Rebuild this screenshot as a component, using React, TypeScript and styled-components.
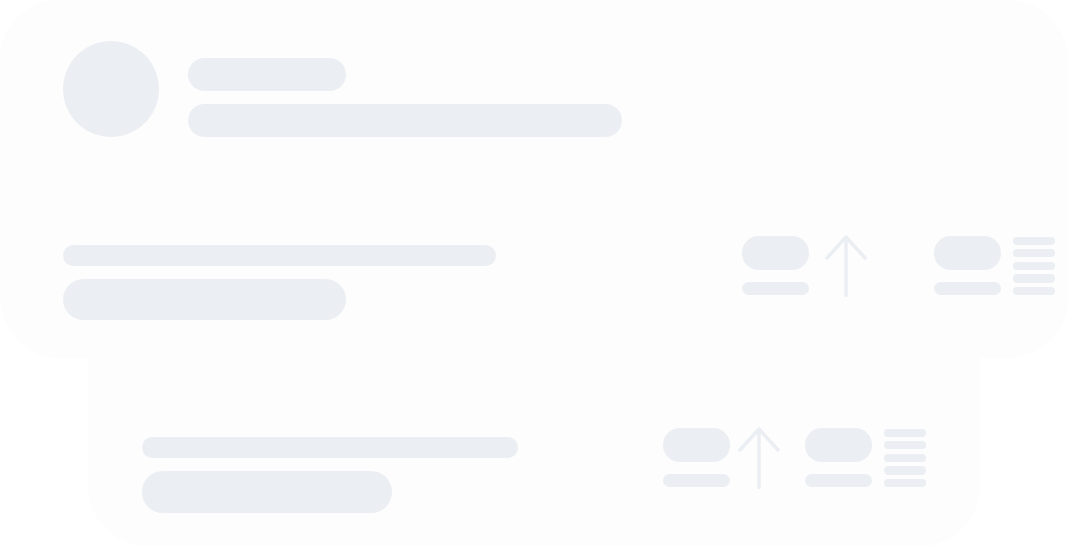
import React from "react";
import styled, { createGlobalStyle } from "styled-components";

const Global = createGlobalStyle`
  html, body { margin: 0; padding: 0; background: #ffffff; overflow: hidden; }
  body { font-family: "Inter", "Liberation Sans", sans-serif; }
`;

const BONE = "#ebeef2";
const CARD = "#fdfdfd";

const Page = styled.div`
  width: 1068px;
  height: 546px;
  display: flex;
  flex-direction: column;
`;

const TopCard = styled.section`
  box-sizing: border-box;
  width: 1068px;
  height: 358px;
  background: ${CARD};
  border-radius: 60px;
  padding: 41px 13px 0 63px;
  display: flex;
  flex-direction: column;
  position: relative;
  z-index: 1;
`;

const BottomCard = styled.section`
  box-sizing: border-box;
  width: 892px;
  height: 188px;
  margin-left: 88px;
  background: ${CARD};
  border-radius: 0 0 60px 60px;
  padding: 68.7px 54px 0 54px;
`;

const Header = styled.div`
  display: flex;
  align-items: flex-end;
  gap: 29px;
`;

const Avatar = styled.div`
  width: 96px;
  height: 96px;
  border-radius: 50%;
  background: ${BONE};
`;

const Stack = styled.div<{ $gap: number }>`
  display: flex;
  flex-direction: column;
  gap: ${(p) => p.$gap}px;
`;

const Bone = styled.div<{ $w: number; $h: number }>`
  width: ${(p) => p.$w}px;
  height: ${(p) => p.$h}px;
  border-radius: ${(p) => p.$h / 2}px;
  background: ${BONE};
  flex: none;
`;

const Row = styled.div<{ $top?: number }>`
  display: flex;
  align-items: flex-start;
  justify-content: space-between;
  margin-top: ${(p) => p.$top ?? 0}px;
`;

const TextBlock = styled(Stack)`
  margin-top: 10.7px;
`;

const Cluster = styled.div<{ $arrowGap: number; $afterArrow: number }>`
  display: flex;
  align-items: center;
  & > svg {
    margin: 0 ${(p) => p.$afterArrow}px 0 ${(p) => p.$arrowGap}px;
  }
`;

const Stat = styled.div`
  display: flex;
  flex-direction: column;
  gap: 12.3px;
`;

const Lines = styled.div`
  display: flex;
  flex-direction: column;
  gap: 4.3px;
  margin-left: 12px;
`;

const Arrow = () => (
  <svg width="42" height="62.5" viewBox="0 0 42 62.5" fill="none">
    <path
      d="M21 2 V60.5 M2 23 L21 2 L40 23"
      stroke={BONE}
      strokeWidth="3.5"
      strokeLinecap="round"
      strokeLinejoin="round"
    />
  </svg>
);

const StatBlock = () => (
  <Stat>
    <Bone $w={67} $h={33.4} />
    <Bone $w={67} $h={13.3} />
  </Stat>
);

const LineBlock = () => (
  <Lines>
    {[0, 1, 2, 3, 4].map((i) => (
      <Bone key={i} $w={42} $h={8.3} />
    ))}
  </Lines>
);

export default function App() {
  return (
    <>
      <Global />
      <Page>
        <TopCard>
          <Header>
            <Avatar />
            <Stack $gap={12.7}>
              <Bone $w={158.4} $h={33.4} />
              <Bone $w={434} $h={33.4} />
            </Stack>
          </Header>
          <Row $top={97.7}>
            <TextBlock $gap={12.3}>
              <Bone $w={433.4} $h={21} />
              <Bone $w={283.4} $h={41.7} />
            </TextBlock>
            <Cluster $arrowGap={16} $afterArrow={67.3}>
              <StatBlock />
              <Arrow />
              <StatBlock />
              <LineBlock />
            </Cluster>
          </Row>
        </TopCard>
        <BottomCard>
          <Row>
            <TextBlock $gap={12.7}>
              <Bone $w={376} $h={21} />
              <Bone $w={250} $h={41.7} />
            </TextBlock>
            <Cluster $arrowGap={8.3} $afterArrow={25}>
              <StatBlock />
              <Arrow />
              <StatBlock />
              <LineBlock />
            </Cluster>
          </Row>
        </BottomCard>
      </Page>
    </>
  );
}
